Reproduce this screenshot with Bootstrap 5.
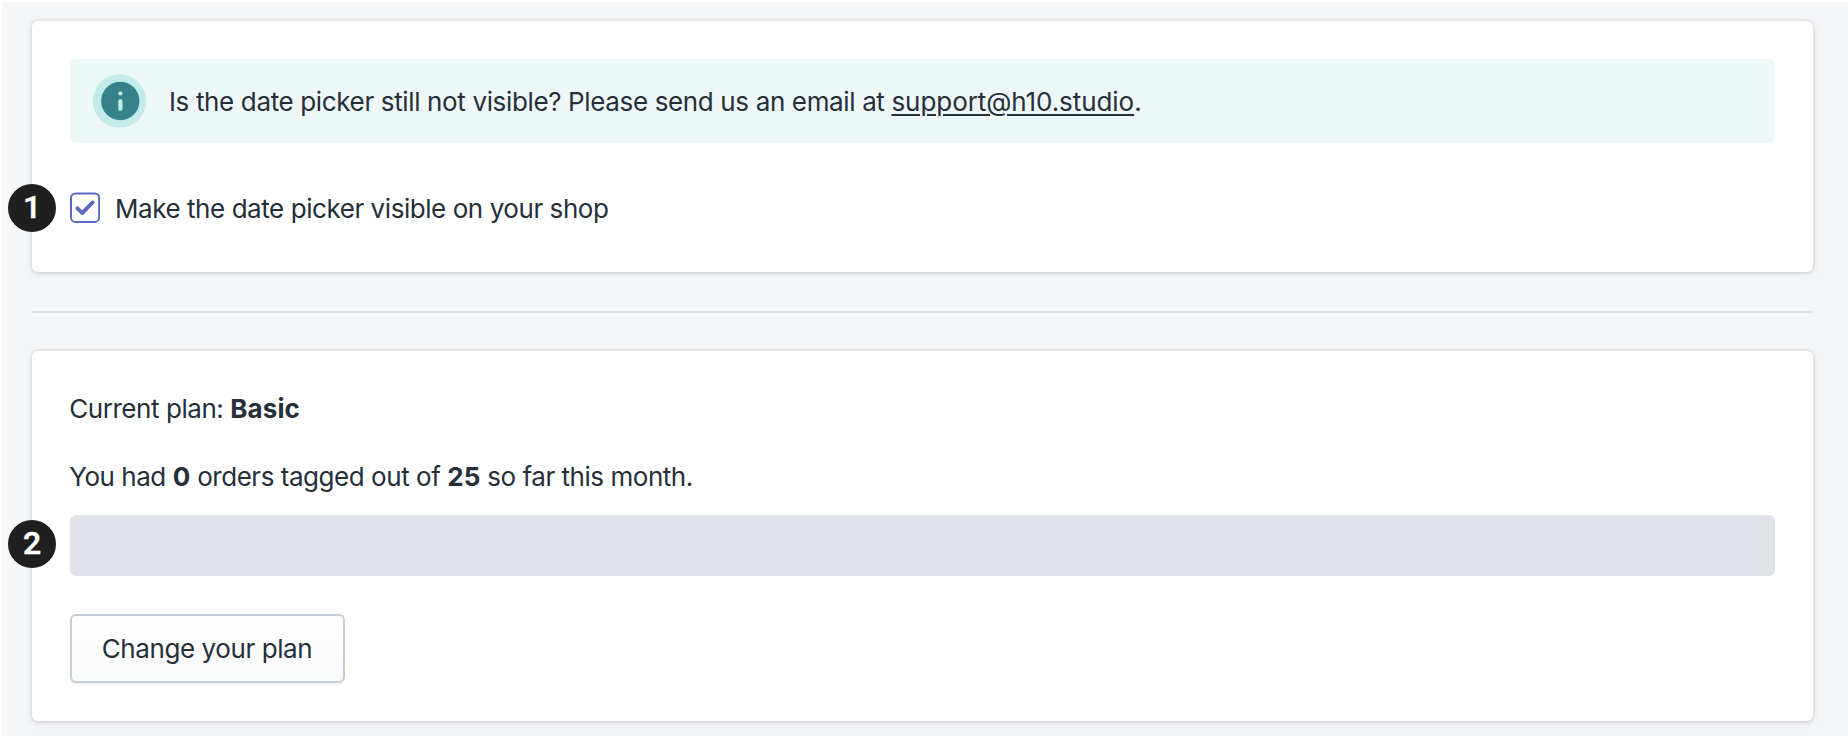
<!DOCTYPE html>
<html lang="en">
<head>
<meta charset="utf-8">
<meta name="viewport" content="width=device-width, initial-scale=1">
<title>Date picker settings</title>
<link href="https://cdn.jsdelivr.net/npm/bootstrap@5.3.0/dist/css/bootstrap.min.css" rel="stylesheet">
<style>
  body { font-family: Inter, "Liberation Sans", sans-serif; font-size: 26px; line-height: 40px; letter-spacing: -.44px; color: #252f3a; background: #fff; padding: 2px 0 0 2px; }
  .page-area { background: #f4f6f8; height: 734px; padding: 19px 35px 0 30px; overflow: hidden; }
  .panel { border: 0; border-radius: 6px; color: inherit; padding: 38px; box-shadow: 0 0 0 2px rgba(63,63,68,.05), 0 2px 6px rgba(63,63,68,.15); }
  .panel-visibility { height: 251px; }
  .panel-plan { height: 370px; }
  .panel strong { letter-spacing: .1px; }
  .notice { height: 84px; border-radius: 6px; background: #eef8f9; padding: 0 23px; gap: 22px; letter-spacing: -.36px; }
  .notice a { color: inherit; letter-spacing: -.07px; text-underline-offset: 3px; text-decoration-thickness: 2px; }
  .notice span, .check-row span { padding-top: 1px; }
  .check-row { margin-top: 45px; height: 40px; gap: 15px; }
  .divider { height: 2px; margin: 39px 0 38px; background: #dfe3e8; }
  .plan-line { text-indent: -.8px; }
  .usage { margin-top: 28px; letter-spacing: -.46px; }
  .meter { height: 61px; margin-top: 18px; border-radius: 6px; background: #dfe3e8; }
  .plan-btn { width: 275px; height: 69px; margin-top: 38px; padding: 0 1px 0 0; border: 2px solid #c4cdd5; border-radius: 6px; background: linear-gradient(#fff, #f9fafb); box-shadow: 0 2px 0 rgba(22,29,37,.05); font-size: 26px; letter-spacing: -.41px; color: #252f3a; }
  .step { width: 48px; height: 48px; left: -24px; background: #1f1f1f; color: #fff; font: 500 32px/46px Roboto, sans-serif; letter-spacing: 0; -webkit-text-stroke: .5px #fff; }
  .step-one { top: 163px; }
  .step-two { top: 169px; }
</style>
</head>
<body>
<main class="page-area">
  <section class="card panel panel-visibility">
    <div class="notice d-flex align-items-center">
      <svg width="54" height="54" viewBox="0 0 54 54" aria-hidden="true">
        <circle cx="26.5" cy="27" r="26.7" fill="#c2ecea"/>
        <circle cx="27.3" cy="27" r="19.2" fill="#37828a"/>
        <circle cx="27.4" cy="19.4" r="2.1" fill="#c2ecea"/>
        <rect x="25.3" y="25.3" width="4.2" height="11.5" rx="1.7" fill="#c2ecea"/>
      </svg>
      <span class="text-nowrap">Is the date picker still not visible? Please send us an email at <a href="#">support@h10.studio</a>.</span>
    </div>
    <label class="check-row d-flex align-items-center">
      <svg width="30" height="32" viewBox="0 0 30 32" aria-hidden="true">
        <rect x="1" y="1.5" width="28.2" height="28.4" rx="4.5" fill="#fff" stroke="#5c6ac4" stroke-width="2"/>
        <path d="M7.4 16.3L12.3 21.1L22.6 10.4" fill="none" stroke="#5c6ac4" stroke-width="3.8" stroke-linecap="round" stroke-linejoin="round"/>
      </svg>
      <span class="text-nowrap">Make the date picker visible on your shop</span>
    </label>
    <span class="step step-one position-absolute rounded-circle text-center">1</span>
  </section>
  <div class="divider"></div>
  <section class="card panel panel-plan">
    <div class="plan-line">Current plan: <strong>Basic</strong></div>
    <div class="plan-line usage">You had <strong>0</strong> orders tagged out of <strong>25</strong> so far this month.</div>
    <div class="meter" role="progressbar" aria-valuenow="0" aria-valuemin="0" aria-valuemax="25"></div>
    <button class="btn plan-btn" type="button">Change your plan</button>
    <span class="step step-two position-absolute rounded-circle text-center">2</span>
  </section>
</main>
<script src="https://cdn.jsdelivr.net/npm/bootstrap@5.3.0/dist/js/bootstrap.bundle.min.js"></script>
</body>
</html>
